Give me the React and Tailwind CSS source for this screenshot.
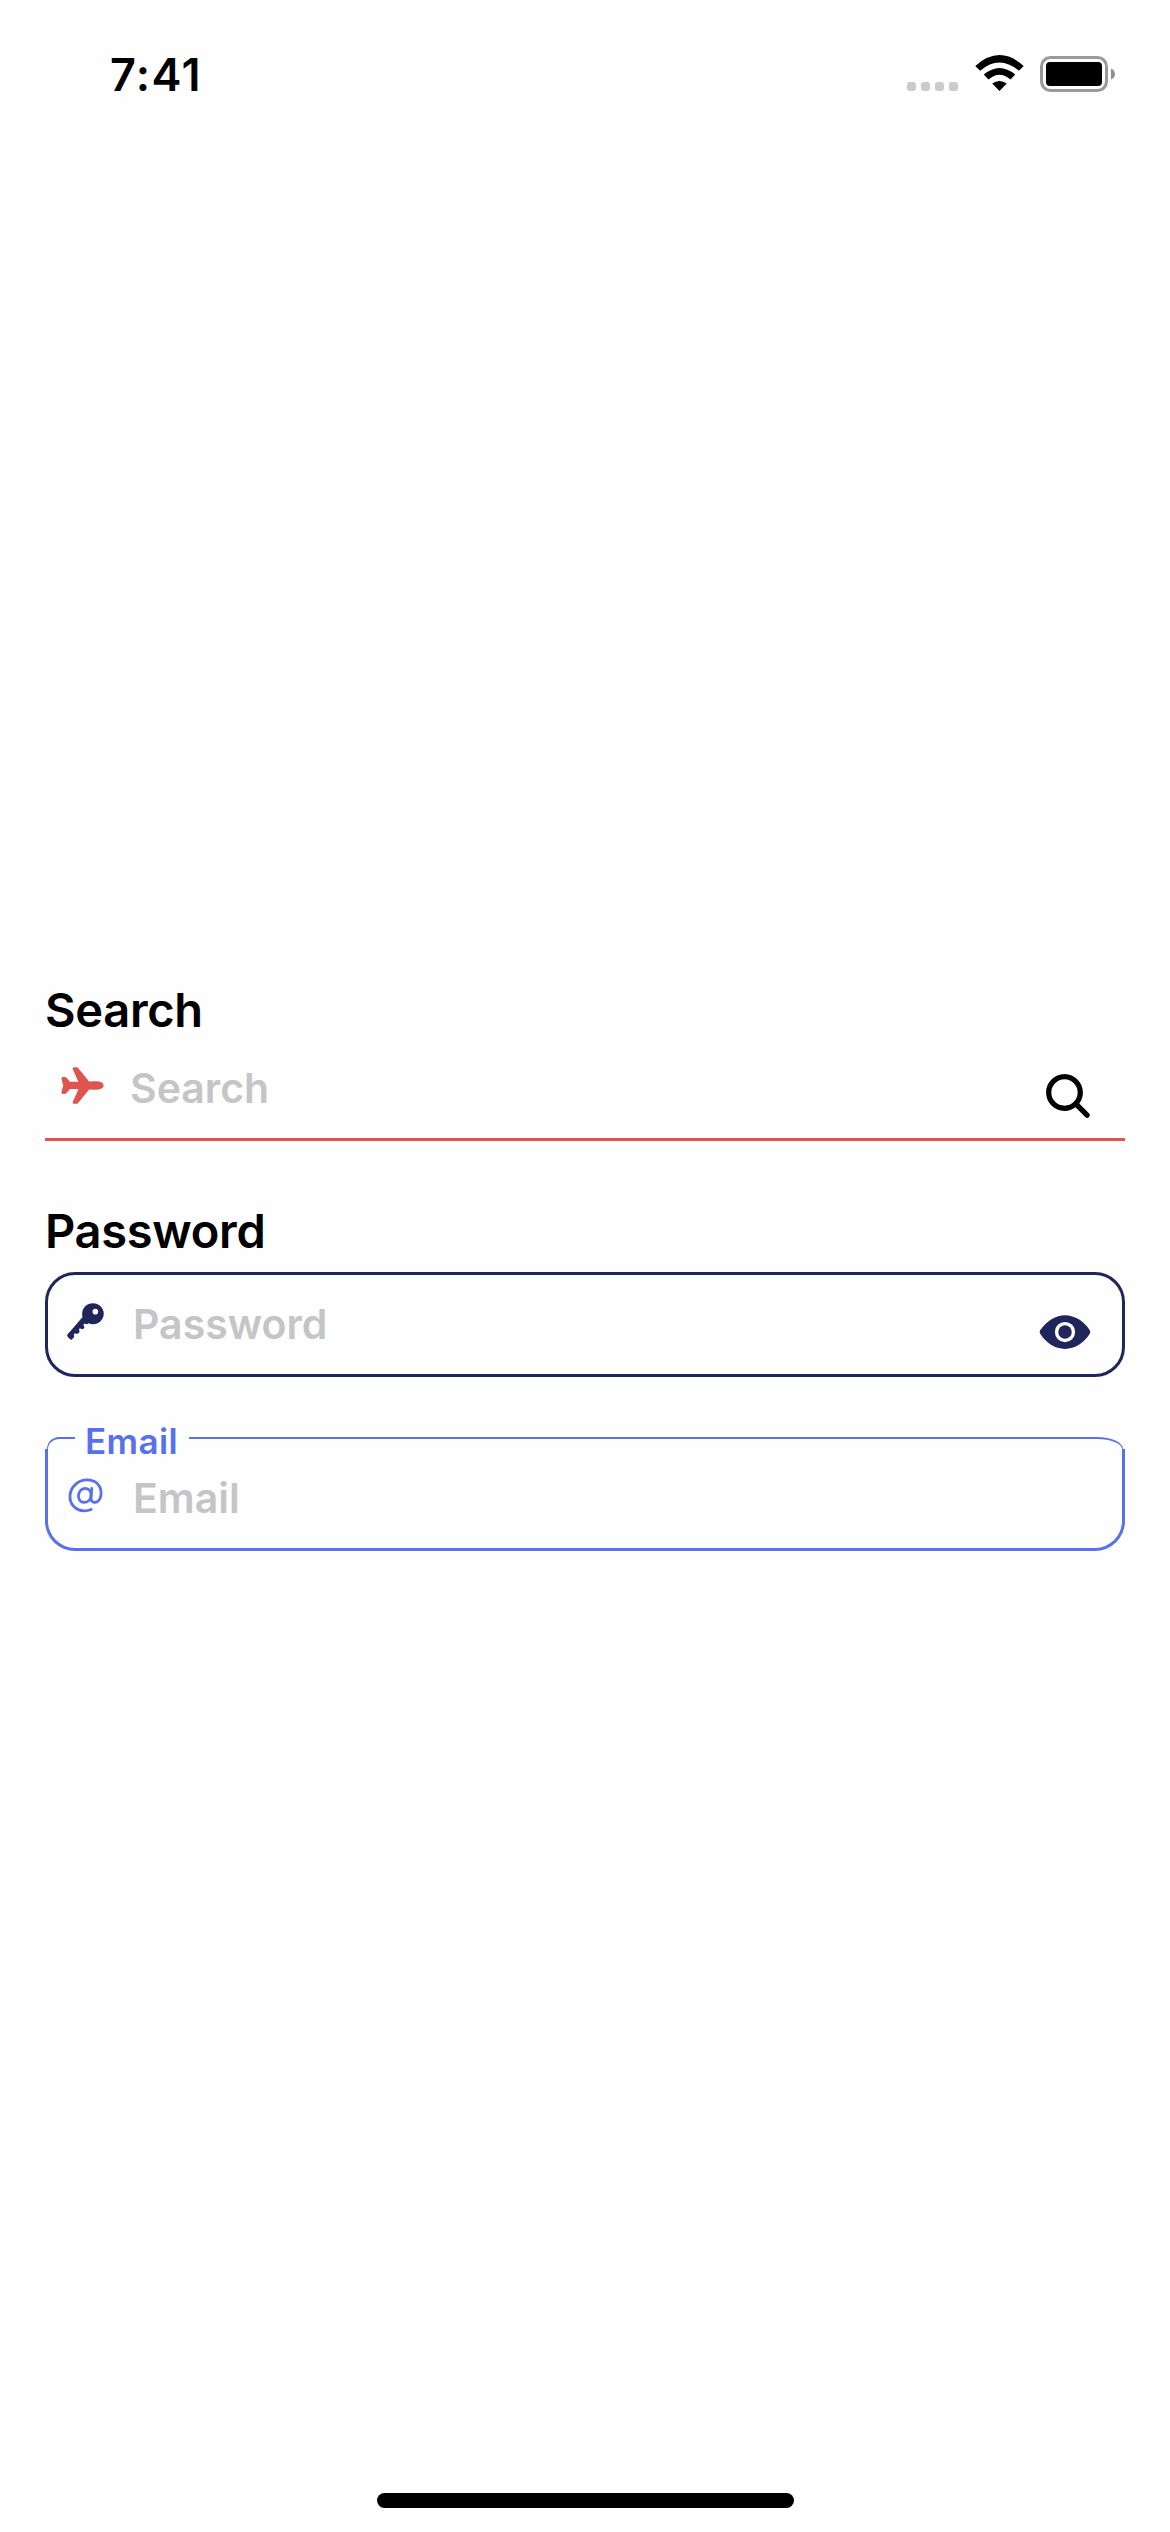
import React from "react";
import { IoAirplane, IoKey, IoEye, IoSearch, IoAtOutline } from "react-icons/io5";

function StatusBar() {
  return (
    <header className="flex h-[147px] items-start justify-between pl-[110px] pr-[54px]">
      <div className="mt-[46px] text-[45px] leading-[58px] font-semibold tracking-[1.4px]">7:41</div>
      <div className="mt-[55px] flex h-[37px] items-start">
        <div className="mt-[27px] mr-[17px] flex gap-[5px]">
          <span className="h-[9px] w-[9px] rounded-[3px] bg-[#cbcbcb]" />
          <span className="h-[9px] w-[9px] rounded-[3px] bg-[#cbcbcb]" />
          <span className="h-[9px] w-[9px] rounded-[3px] bg-[#cbcbcb]" />
          <span className="h-[9px] w-[9px] rounded-[3px] bg-[#cbcbcb]" />
        </div>
        <svg width="49" height="37" viewBox="0 0 49 37" className="mr-[16px]">
          <path d="M0.3 11 Q24.5 -10.8 48.7 11 L43.9 15.8 Q24.5 -0.8 5.1 15.8Z" fill="#000" />
          <path d="M8.8 19.5 Q24.5 6.5 40.2 19.5 L35.5 24.4 Q24.5 15 13.5 24.4Z" fill="#000" />
          <path d="M17.2 28.6 Q24.5 23.2 31.8 28.6 L24.5 36Z" fill="#000" />
        </svg>
        <svg width="76" height="37" viewBox="0 0 76 37">
          <rect x="1.5" y="2.5" width="65" height="33" rx="9" fill="none" stroke="#999999" strokeWidth="3" />
          <rect x="6" y="7" width="56" height="24" rx="4" fill="#000" />
          <path d="M71 13.5c5.3 2 5.3 9 0 11z" fill="#8e8e8e" />
        </svg>
      </div>
    </header>
  );
}

function Label({ children }) {
  return <div className="-mt-[1px] mb-[1px] h-[60px] text-[47px] leading-[60px] font-[560] tracking-[-0.3px]">{children}</div>;
}

function Placeholder({ children }) {
  return (
    <span className="ml-[25px] flex-1 text-[41px] leading-[54px] font-[570] tracking-[0px] text-[#c5c5c7]">
      {children}
    </span>
  );
}

export default function App() {
  return (
    <div className="flex h-[2532px] w-[1170px] flex-col bg-[#fefefe] font-['Inter',sans-serif] text-black">
      <StatusBar />
      <main className="flex flex-1 flex-col px-[45px] pt-[834px]">
        <section className="flex flex-col">
          <Label>Search</Label>
          <div className="flex h-[100px] items-start border-b-[3px] border-[#de544e] pt-[20px] pl-[15px]">
            <IoAirplane className="mt-[2px] h-[45px] w-[45px] text-[#de544e]" />
            <Placeholder>Search</Placeholder>
            <IoSearch className="mt-[8px] mr-[30px] h-[54px] w-[54px]" />
          </div>
        </section>
        <section className="mt-[61px] flex flex-col">
          <Label>Password</Label>
          <div className="mt-[10px] flex h-[105px] items-start rounded-[30px] border-[3px] border-[#20265c] pt-[22px] pl-[15px]">
            <IoKey className="mt-[2px] h-[45px] w-[45px] text-[#20265c]" />
            <Placeholder>Password</Placeholder>
            <IoEye className="mt-[8px] mr-[30px] h-[54px] w-[54px] text-[#20265c]" />
          </div>
        </section>
        <section className="mt-[60px] flex flex-col">
          <div className="flex h-[12px] items-start">
            <div className="ml-[2px] h-[12px] w-[28px] rounded-tl-[12px] border-t-[2px] border-l-[1px] border-[#5870ee]" />
            <div className="-mt-[19px] w-[114px] pl-[10px] text-[35px] leading-[46px] font-semibold tracking-[0.4px] text-[#5870ee]">
              Email
            </div>
            <div className="mr-[2px] h-[12px] flex-1 rounded-tr-[26px_12px] border-t-[2px] border-r-[1px] border-[#5870ee]" />
          </div>
          <div className="flex h-[102px] items-start rounded-b-[30px] border-x-[3px] border-b-[3px] border-[#5870ee] pt-[22px] pl-[15px]">
            <IoAtOutline className="mt-[2px] h-[45px] w-[45px] text-[#5870ee]" />
            <Placeholder>Email</Placeholder>
          </div>
        </section>
      </main>
      <footer className="mb-[24px] flex justify-center">
        <div className="h-[15px] w-[417px] rounded-full bg-black" />
      </footer>
    </div>
  );
}
